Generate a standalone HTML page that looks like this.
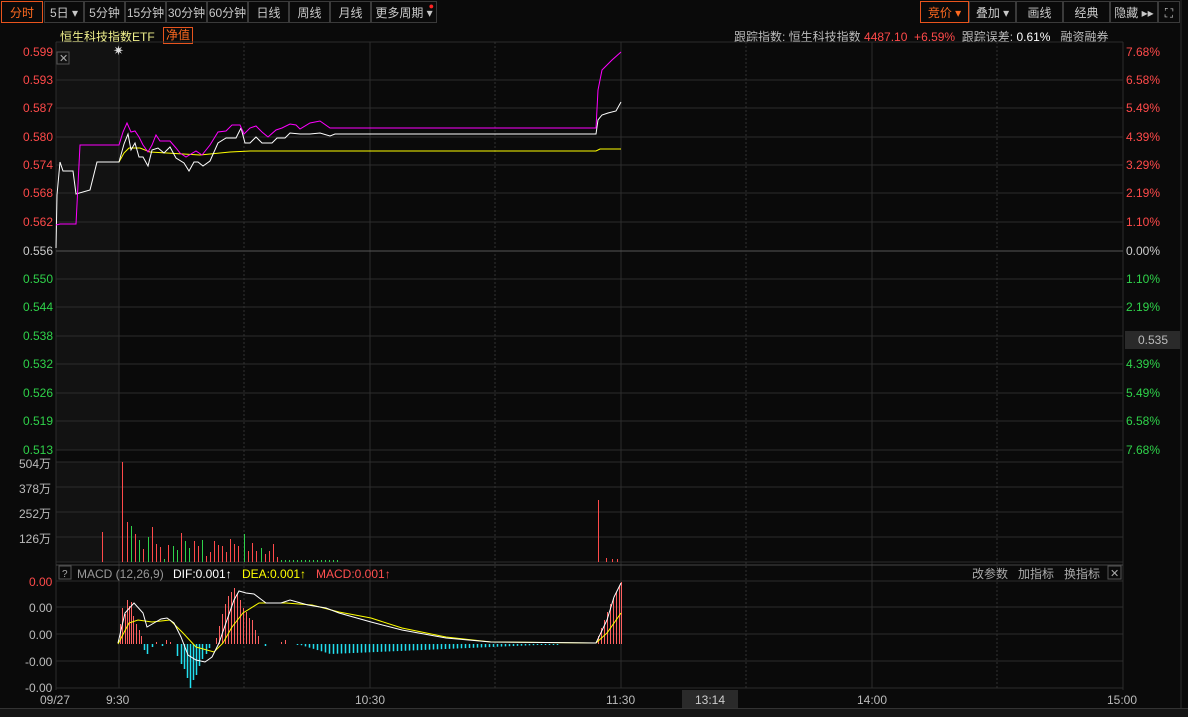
<!DOCTYPE html>
<html><head><meta charset="utf-8"><style>
body{margin:0;width:1188px;height:716px;background:#0a0a0a;overflow:hidden;font-family:"Liberation Sans","Noto Sans CJK SC",sans-serif;position:relative}
.t{position:absolute;font-size:12px;white-space:nowrap}
.btn{position:absolute;top:1px;height:22px;border:1px solid #3a3a3a;color:#c8c8c8;font-size:12px;line-height:22px;text-align:center;box-sizing:border-box}
svg{position:absolute;left:0;top:0}
</style></head><body>
<div class="btn" style="left:1px;width:42px;border-color:#e8541d;color:#ff6a20">分时</div>
<div class="btn" style="left:44px;width:40px">5日 ▾</div>
<div class="btn" style="left:84px;width:41px">5分钟</div>
<div class="btn" style="left:125px;width:41px">15分钟</div>
<div class="btn" style="left:166px;width:41px">30分钟</div>
<div class="btn" style="left:207px;width:41px">60分钟</div>
<div class="btn" style="left:248px;width:41px">日线</div>
<div class="btn" style="left:289px;width:41px">周线</div>
<div class="btn" style="left:330px;width:41px">月线</div>
<div class="btn" style="left:371px;width:66px">更多周期 ▾<span style="position:absolute;right:2px;top:-7px;color:#f22;font-size:9px">●</span></div>
<div class="btn" style="left:920px;width:49px;border-color:#e8541d;color:#ff6a20">竞价 ▾</div>
<div class="btn" style="left:969px;width:47px">叠加 ▾</div>
<div class="btn" style="left:1016px;width:47px">画线</div>
<div class="btn" style="left:1063px;width:47px">经典</div>
<div class="btn" style="left:1110px;width:48px">隐藏 ▸▸</div>
<div class="btn" style="left:1158px;width:22px">⛶</div>
<div class="t" style="left:60px;top:28px;color:#f0f08c">恒生科技指数ETF</div>
<div class="t" style="left:163px;top:27px;color:#ff6a20;border:1px solid #e8541d;padding:0 2px;line-height:15px">净值</div>
<div class="t" style="left:734px;top:28px;color:#bbb">跟踪指数: 恒生科技指数 <span style="color:#ff4a4a">4487.10 &nbsp;+6.59%</span> &nbsp;跟踪误差: <span style="color:#fff">0.61%</span> &nbsp;&nbsp;融资融券</div>
<svg width="1188" height="716" font-family="Liberation Sans" font-size="12">
<rect x="56" y="42" width="63" height="408" fill="#121212"/>
<rect x="56" y="462" width="63" height="100" fill="#121212"/>
<g stroke="#2c2c2c">
<path d="M56,42H1123M56,80H1123M56,108H1123M56,137H1123M56,165H1123M56,193H1123M56,222H1123M56,279H1123M56,307H1123M56,336H1123M56,364H1123M56,393H1123M56,421H1123M56,450H1123"/>
<path d="M56,462H1123M56,487H1123M56,512H1123M56,537H1123M56,562H1123M56,581H1123M56,607H1123M56,634H1123M56,661H1123M56,688H1123"/>
<path d="M119,42V688M370,42V688M621,42V688M872,42V688M56,42V690M1123,42V690M1181,0V716"/>
</g>
<path d="M56,251H1123" stroke="#555"/>
<g stroke="#333" stroke-dasharray="2,2"><path d="M244,42V688M495,42V688M746,42V688M997,42V688"/></g>
<path d="M56,565H1123" stroke="#444"/>
<g fill="#ff4a4a" font-size="12">
<text x="23" y="56">0.599</text><text x="23" y="84">0.593</text><text x="23" y="112">0.587</text><text x="23" y="141">0.580</text><text x="23" y="169">0.574</text><text x="23" y="197">0.568</text><text x="23" y="226">0.562</text>
<text x="1126" y="56">7.68%</text><text x="1126" y="84">6.58%</text><text x="1126" y="112">5.49%</text><text x="1126" y="141">4.39%</text><text x="1126" y="169">3.29%</text><text x="1126" y="197">2.19%</text><text x="1126" y="226">1.10%</text>
</g>
<text x="23" y="255" fill="#ccc">0.556</text><text x="1126" y="255" fill="#ccc">0.00%</text>
<g fill="#2fd24a">
<text x="23" y="283">0.550</text><text x="23" y="311">0.544</text><text x="23" y="340">0.538</text><text x="23" y="368">0.532</text><text x="23" y="397">0.526</text><text x="23" y="425">0.519</text><text x="23" y="454">0.513</text>
<text x="1126" y="283">1.10%</text><text x="1126" y="311">2.19%</text><text x="1126" y="368">4.39%</text><text x="1126" y="397">5.49%</text><text x="1126" y="425">6.58%</text><text x="1126" y="454">7.68%</text>
</g>
<rect x="1125" y="331" width="55" height="18" fill="#2a2a2a"/><text x="1138" y="344" fill="#bbb">0.535</text>
<g fill="#bbb"><text x="19" y="468">504万</text><text x="19" y="493">378万</text><text x="19" y="518">252万</text><text x="19" y="543">126万</text></g>
<text x="29" y="586" fill="#ff4a4a">0.00</text>
<g fill="#bbb"><text x="29" y="612">0.00</text><text x="29" y="639">0.00</text><text x="25" y="666">-0.00</text><text x="25" y="692">-0.00</text></g>
<g fill="#bbb"><text x="40" y="704">09/27</text><text x="106" y="704">9:30</text><text x="355" y="704">10:30</text><text x="606" y="704">11:30</text><text x="857" y="704">14:00</text><text x="1107" y="704">15:00</text></g>
<rect x="682" y="690" width="56" height="18" fill="#2a2a2a"/><text x="695" y="704" fill="#ccc">13:14</text>
<rect x="57" y="52" width="12" height="12" fill="none" stroke="#555"/><text x="59" y="62" fill="#aaa" font-size="11">✕</text>
<text x="113" y="55" fill="#ddd" font-size="13">✷</text>
<rect x="59" y="566" width="12" height="13" fill="none" stroke="#555"/><text x="62" y="577" fill="#aaa" font-size="10">?</text>
<text x="77" y="578" fill="#999">MACD (12,26,9)</text><text x="173" y="578" fill="#fff">DIF:0.001↑</text><text x="242" y="578" fill="#ff0">DEA:0.001↑</text><text x="316" y="578" fill="#ff5050">MACD:0.001↑</text>
<text x="972" y="578" fill="#aaa">改参数</text><text x="1018" y="578" fill="#aaa">加指标</text><text x="1064" y="578" fill="#aaa">换指标</text>
<rect x="1108" y="566" width="13" height="13" fill="none" stroke="#555"/><text x="1110" y="577" fill="#aaa" font-size="11">✕</text>
<polyline fill="none" stroke="#ffff00" points="119,162 124,153 129,148 140,148 150,152 200,155 230,152 250,151 596,151 600,149 621,149"/>
<polyline fill="none" stroke="#fff" points="56,248 57,195 60,162 63,171 73,171 76,194 90,190 97,162 119,162 124,144 128,134 131,150 135,143 139,157 143,157 148,166 152,150 158,148 164,153 170,147 176,158 184,163 189,171 194,162 198,162 203,166 210,161 218,143 226,138 236,138 241,128 245,143 250,143 256,137 262,143 272,143 277,138 285,138 290,133 300,134 310,134 320,133 330,136 335,134 596,134 598,120 602,115 608,113 616,111 621,102"/>
<polyline fill="none" stroke="#f0f" points="56,225 60,224 76,224 80,145 119,145 123,132 127,123 131,132 135,131 139,137 143,145 148,152 152,145 156,135 160,141 170,141 176,148 180,153 186,157 196,151 202,155 210,145 218,132 226,131 232,125 240,125 244,134 250,128 256,126 262,132 268,137 276,130 282,128 290,124 296,125 300,129 310,123 320,121 330,128 596,128 598,90 602,70 606,66 612,60 621,52"/>
<g id="vb"></g><g id="mb"></g>
<polyline fill="none" stroke="#ffff00" points="118,644 129,623 138,620 152,622 170,620 183,633 196,647 214,652 223,643 232,627 243,613 259,603 286,603 312,605 339,612 371,618 402,628 446,637 491,642 596,643 607,633 621,613"/>
<polyline fill="none" stroke="#fff" points="118,643 125,613 134,603 143,613 147,627 154,623 161,619 167,618 174,623 181,637 188,655 196,660 205,662 212,657 219,643 228,617 234,600 239,591 246,593 254,594 266,603 281,603 290,600 308,605 326,608 339,613 371,622 402,630 446,638 491,642 596,643 607,620 614,597 621,583"/>
</svg>
<div style="position:absolute;left:0;top:708px;width:1188px;height:8px;background:#151515;border-top:1px solid #333"></div>
<script>
var ns="http://www.w3.org/2000/svg";
function L(g,x,y1,y2,c,w){var l=document.createElementNS(ns,"line");l.setAttribute("x1",x);l.setAttribute("x2",x);l.setAttribute("y1",y1);l.setAttribute("y2",y2);l.setAttribute("stroke",c);l.setAttribute("stroke-width",w||1);document.getElementById(g).appendChild(l);}
var R="#ff4a4a",G="#2fd24a",MR="#ff6060",C="#22e0f0";
var v=[[102,30,R],[122,100,R],[127,40,R],[131,36,G],[135,28,R],[139,22,G],[143,13,R],[148,25,G],[152,35,R],[156,18,R],[160,15,R],[164,3,G],[168,17,R],[173,16,G],[177,12,G],[181,29,R],[185,21,G],[189,14,G],[194,21,R],[198,16,R],[202,22,G],[206,6,R],[210,10,R],[214,21,R],[218,17,R],[222,16,R],[226,10,R],[230,23,R],[234,18,R],[238,16,R],[244,28,G],[248,11,R],[252,19,R],[256,11,R],[261,14,G],[265,8,R],[269,11,R],[273,18,R],[277,5,R],[598,62,R],[606,4,R],[612,3,R],[617,3,R]];
v.forEach(function(a){L("vb",a[0]+.5,562,562-a[1],a[2]);});
for(var x=281;x<338;x+=4)L("vb",x+.5,562,560,x%8?G:R);
var z=644;
[[120,-20],[122,-36],[125,-30],[127,-44],[129,-38],[131,-42],[133,-28],[136,-20],[139,-14],[141,-8]].forEach(function(a){L("mb",a[0]+.5,z,z+a[1],MR);});
[[144,6],[147,10],[152,3],[156,-2],[162,2],[166,-4],[170,-2],[177,12],[181,20],[184,25],[187,34],[190,44],[193,36],[196,31],[199,22],[202,15],[206,10],[209,4]].forEach(function(a){L("mb",a[0]+.5,z,z+a[1],a[1]<0?MR:C,a[1]<0?1:1.5);});
[[216,-6],[219,-18],[222,-30],[225,-40],[228,-48],[231,-52],[234,-56],[237,-50],[240,-44],[243,-36],[246,-32],[249,-26],[252,-24],[255,-14],[258,-8],[265,2],[281,-2],[285,-4]].forEach(function(a){L("mb",a[0]+.5,z,z+a[1],a[1]<0?MR:C,a[1]<0?1:1.5);});
for(var x=297;x<560;x+=4){var h=x<330?(x-297)/33*10:10*(1-(x-330)/230);L("mb",x+.5,z,z+Math.max(1,h),C,1.5);}
[[598,-8],[601,-16],[604,-24],[607,-32],[610,-40],[613,-46],[616,-52],[619,-58],[621,-62]].forEach(function(a){L("mb",a[0]+.5,z,z+a[1],MR);});
</script>
</body></html>
